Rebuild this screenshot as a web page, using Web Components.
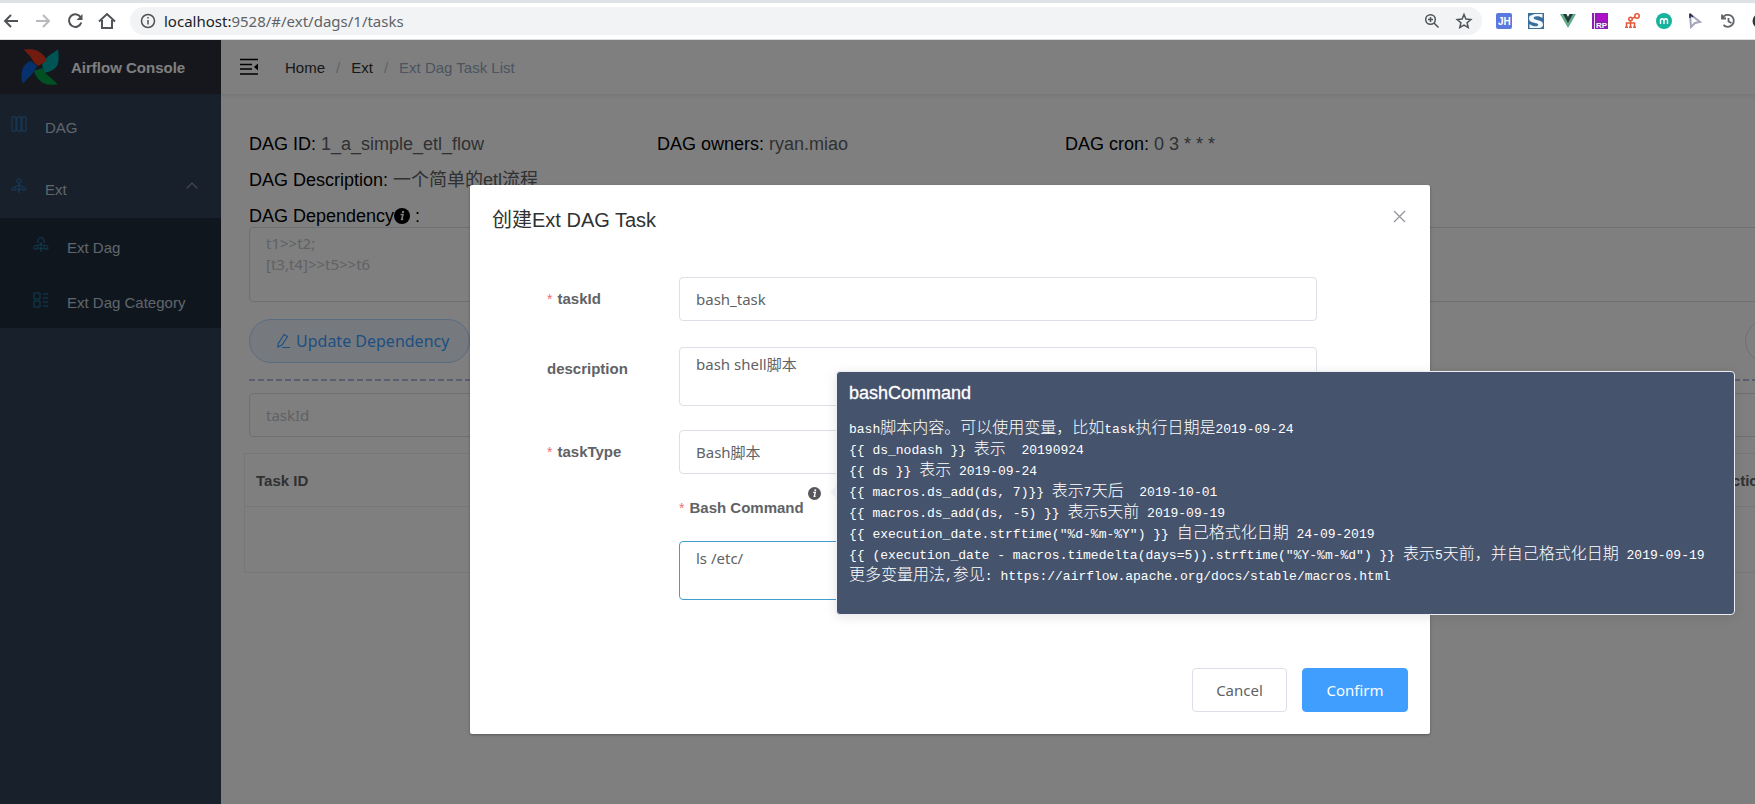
<!DOCTYPE html>
<html lang="en">
<head>
<meta charset="utf-8">
<title>Airflow Console</title>
<style>
html, body { margin: 0; height: 100%; }
body { overflow: hidden; font-family: "Liberation Sans", "Noto Sans CJK SC", sans-serif; color: #303133; }
</style>
</head>
<body>
<console-page></console-page>
<script>
const UI = '"Noto Sans", "Noto Sans CJK SC", sans-serif';
const define = (name, html) => {
  const template = document.createElement('template');
  template.innerHTML = html;
  customElements.define(name, class extends HTMLElement {
    constructor() {
      super();
      this.attachShadow({ mode: 'open' }).append(template.content.cloneNode(true));
    }
  });
};
// One block per line, with runs of Chinese text wrapped so that they can be set two Latin cells wide.
const lines = text => text.split('\n').map(line =>
  `<div>${line.replace(/[\u3000-\u9fff\uff00-\uffef]+|[^\u3000-\u9fff\uff00-\uffef]+/g, run =>
    `<span${/[\u3000-\uffef]/.test(run) ? ' class="han"' : ''}>${run}</span>`)}</div>`).join('');

define('browser-bar', `
<style>
:host { display: flex; align-items: center; box-sizing: border-box; height: 40px; border-top: 3px solid #dee1e6; border-bottom: 1px solid #dcdddf; background: #fff; padding-left: 1px; position: relative; overflow: hidden; flex: none; }
.tab { position: absolute; left: 1618px; top: -3px; width: 74px; height: 3px; background: #fff; border-radius: 8px 8px 0 0; }
nav { display: flex; gap: 12px; margin-right: 13px; }
button { all: unset; display: block; width: 20px; height: 20px; }
svg { display: block; width: 20px; height: 20px; fill: none; stroke: #505357; stroke-width: 2; }
.off svg { stroke: #b8babd; }
label { flex: 1; display: flex; align-items: center; gap: 6px; height: 28px; border-radius: 14px; background: #f1f3f4; padding: 0 8px; }
.addr { flex: 1; display: flex; font: 15px/28px ${UI}; color: #5f6368; }
.addr b { font-weight: 400; color: #202124; }
.tools { display: flex; gap: 12px; }
.ext { display: flex; gap: 16px; margin-left: 14px; width: 259px; flex: none; }
.ext svg { width: 16px; height: 16px; flex: none; stroke: none; }
.ext text { font: bold 8px "Liberation Sans", sans-serif; }
</style>
<div class="tab"></div>
<nav>
<button aria-label="Back"><svg viewBox="0 0 20 20"><path d="M17 10H4M10 4l-6 6 6 6"/></svg></button>
<button class="off" aria-label="Forward"><svg viewBox="0 0 20 20"><path d="M3 10h13M10 4l6 6-6 6"/></svg></button>
<button aria-label="Reload"><svg viewBox="0 0 20 20"><path d="M15.500 6A6.300 6.300 0 1 0 16.300 11.500"/><path d="M17.500 3v6h-6z" fill="#505357" stroke="none"/></svg></button>
<button aria-label="Home page"><svg viewBox="0 0 20 20"><path d="M2 10.500 10 3l8 7.500M5 9v8h10V9"/></svg></button>
</nav>
<label>
<svg viewBox="0 0 20 20" style="stroke-width:1.500"><circle cx="10" cy="10" r="6.500"/><path d="M10 9v4.500M10 6v1.500"/></svg>
<span class="addr"><b>localhost:</b>9528/#/ext/dags/1/tasks</span>
<span class="tools">
<svg viewBox="0 0 20 20" style="stroke-width:1.500"><circle cx="8.500" cy="8.500" r="4.800"/><path d="M12 12l4.500 4.500M8.500 6v5M6 8.500h5"/></svg>
<svg viewBox="0 0 20 20" style="stroke-width:1.500"><path d="M10 3.500l1.900 4.600 4.900.4-3.700 3.200 1.100 4.800-4.200-2.500-4.200 2.500 1.100-4.800-3.700-3.200 4.900-.4z"/></svg>
</span>
</label>
<div class="ext">
<svg viewBox="0 0 16 16"><rect width="16" height="16" rx="2" fill="#5b78e0"/><text x="2" y="12" style="font-size:10px" fill="#fff">JH</text></svg>
<svg viewBox="0 0 16 16"><path d="M0 0h16v16H0z" fill="#3c6e9b"/><path d="M1.500 3l5-2h8v4C12 3 8 2.500 6 4c-1 1.500 1 2.500 3 3 4 .8 6 2 6 4.500 0 2-1.500 3.500-4 3.500H1.500v-4c3 2.500 7 3 8.500 1.500 1-1.500-1-2-3-2.500C3 9.200 1 8 1 5.500z" fill="#f2f8fc"/></svg>
<svg viewBox="0 0 16 16"><path d="M0 1h6l2 4 2-4h6L8 15z" fill="#62ac8a"/><path d="M3 1h3.500L8 4l1.500-3H13L8 10z" fill="#263c3c"/></svg>
<svg viewBox="0 0 16 16"><path d="M0 0h16v16H0z" fill="#8b1fb0"/><path d="M2 0h1v16H2z" fill="#f0d8f8"/><path d="M5 1h10v7H5z" fill="#b010c8"/><text x="4" y="15" fill="#fff">RP</text></svg>
<svg viewBox="0 0 16 16"><g fill="none" stroke="#e45a3c" stroke-width="1.600"><circle cx="13" cy="3" r="2.200"/><circle cx="6.500" cy="6" r="1.700"/><path d="M8 5.500l3-1.500M6.500 8v6M2.500 14v-4h8v4M1 14.200h3M5 14.200h3M9 14.200h3"/></g></svg>
<svg viewBox="0 0 16 16"><circle cx="8" cy="8" r="8" fill="#16b39c"/><path d="M4.500 11V6v2c0-3 3.500-3 3.500 0v3V8c0-3 3.500-3 3.500 0v3" fill="none" stroke="#fff" stroke-width="1.400"/></svg>
<svg viewBox="0 0 16 16"><path d="M2 1l10 8-5 1-4 4z" fill="#fff" stroke="#a4a5bd"/><path d="M2 1v4M2 1l3 3" stroke="#22254a" stroke-width="1.500"/></svg>
<svg viewBox="0 0 16 16"><g fill="none" stroke="#606367" stroke-width="1.800"><path d="M2.500 5A6 6 0 1 1 3.500 12M2 1.500v4h4M8.500 5v3.500l3 1.500"/></g></svg>
<svg viewBox="0 0 16 16"><circle cx="8" cy="8" r="7.500" fill="#33363b"/></svg>
</div>`);

define('menu-item', `
<style>
:host { display: block; }
a { display: flex; align-items: center; box-sizing: border-box; height: var(--h, 62px); padding-left: var(--indent, 11px); color: #bfcbd9; text-decoration: none; font-size: 15px; }
.icon { display: flex; width: 16px; margin-right: 18px; padding-bottom: 2px; }
.label { flex: 1; padding-top: 4px; }
.tail { display: flex; margin-right: 23px; padding-bottom: 2px; }
</style>
<a href="#"><span class="icon"><slot name="icon"></slot></span><span class="label"><slot></slot></span><span class="tail"><slot name="tail"></slot></span></a>`);

define('side-bar', `
<style>
:host { display: block; width: 221px; flex: none; background: #304156; }
.logo { display: flex; align-items: center; height: 54px; background: #2b2f3a; color: #fff; font-weight: 700; font-size: 15px; padding-left: 20px; gap: 11px; }
.logo svg { width: 40px; height: 40px; }
svg { width: 16px; height: 16px; fill: none; stroke: #2c78c0; display: block; }
.tail { width: 12px; height: 12px; stroke: #909399; }
.sub { background: #1f2d3d; --h: 55px; --indent: 33px; }
.sub svg { stroke: #2080b0; }
</style>
<div class="logo">
<svg viewBox="0 0 40 40"><g stroke="none"><path d="M38 2.500C39 9 39 15 37 19 34 23 29 25 24 26l-2-8C26 9 32 7 38 2.500z" fill="#00a9a6"/><path d="M37.500 37.500C32 38 27 38 23 36 18 33 15 28 14 24l8-3C27 30 33 31 37.500 37.500z" fill="#00a046"/><path d="M3 37C1 32 1 28 2 24 3 19 7 15 11 14l6 5c-1 3-3 5-5 8-3 4-6 5-9 10z" fill="#0c62d8"/><path d="M4 2.500C10 2 14 2 18 4c5 3 8 6 8.500 10L18 19c-2-2-5-4-6-7C10 8 7 7 4 2.500z" fill="#e43921"/></g></svg>
<span>Airflow Console</span></div>
<menu-item><svg slot="icon" viewBox="0 0 16 16"><path d="M1 1h4v14H1zM6 1h4v14H6zM11 1h4v14h-4z"/></svg>DAG</menu-item>
<menu-item><svg slot="icon" viewBox="0 0 16 16"><circle cx="8" cy="3" r="2.200"/><path d="M8 5v10M8 7L4 9M8 7l4 2M1 12c0-4 4-4 4 0zM11 12c0-4 4-4 4 0zM6 11l2 1 2-1"/></svg>Ext<svg slot="tail" class="tail" viewBox="0 0 16 16"><path d="M1 11l7-7 7 7" stroke-width="1.500"/></svg></menu-item>
<div class="sub">
<menu-item><svg slot="icon" viewBox="0 0 16 16"><path d="M5 6V3c0-3 6-3 6 0v3M8 5v10M8 7L4 9M8 7l4 2M1 12c0-5 4-5 4 0zM11 12c0-5 4-5 4 0zM6 11l2 1 2-1"/></svg>Ext Dag</menu-item>
<menu-item><svg slot="icon" viewBox="0 0 16 16"><path d="M1 1h6v6H1zM1 9h6v6H1zM10 2h5M10 6h5M10 10h5M10 14h5"/></svg>Ext Dag Category</menu-item>
</div>`);

define('top-nav', `
<style>
:host { display: flex; align-items: center; height: 55px; box-sizing: border-box; border-bottom: 1px solid #f0f1f2; box-shadow: 0 1px 4px rgba(0,21,41,.08); padding-left: 18px; gap: 26px; font-size: 15px; background: #fff; }
svg { width: 20px; height: 20px; display: block; }
nav { display: flex; gap: 11px; color: #97a8be; }
i { color: #c0c4cc; font-style: normal; }
a { color: #303133; text-decoration: none; }
</style>
<svg viewBox="0 0 20 20"><path d="M1 2.500h18M1 7.500h12M1 12h12M1 17h18" stroke="#000" stroke-width="1.500"/><path d="M19 6.500v7l-4-3.500z"/></svg>
<nav><a href="#">Home</a><i>/</i><a href="#">Ext</a><i>/</i><span>Ext Dag Task List</span></nav>`);

define('info-icon', `
<style>:host { display: inline-block; width: 16px; height: 16px; } svg { display: block; width: 100%; height: 100%; }</style>
<svg viewBox="0 0 16 16"><circle cx="8" cy="8" r="8" fill="currentColor"/><path d="M6.500 6.500h2.500l-1.300 5h1.600" fill="none" stroke="#fff" stroke-width="1.600"/><circle cx="9" cy="3.900" r="1.200" fill="#fff"/></svg>`);

define('dag-detail', `
<style>
:host { display: block; padding: 31px 19px 0 28px; }
.facts { display: grid; grid-template-columns: repeat(4, 1fr); font-size: 18px; line-height: 36px; color: #606266; }
.wide { grid-column: 1 / -1; }
b { font-weight: 400; color: #000; }
info-icon { vertical-align: -2px; color: #000; }
textarea, input { display: block; box-sizing: border-box; width: 100%; border: 1px solid #dcdfe6; border-radius: 4px; background: #fff; font: 15px/22px ${UI}; color: #606266; resize: none; }
textarea { height: 75px; padding: 5px 16px; margin-top: -7px; line-height: 21px; }
input { height: 44px; padding: 0 16px; }
::placeholder { color: #c0c4cc; opacity: 1; }
.row { display: flex; justify-content: space-between; margin: 17px 0 16px; }
button { box-sizing: border-box; height: 44px; border-radius: 22px; font: 16px/22px ${UI}; display: flex; align-items: center; gap: 5px; padding: 0 20px 0 25px; }
.update { border: 1px solid #b3d8ff; background: #ecf5ff; color: #409eff; }
.update svg { width: 16px; height: 16px; fill: none; stroke: currentColor; }
.more { width: 136px; border: 1px solid #dcdfe6; background: #fff; }
hr { border: 0; height: 2px; margin: 0 0 12px; background: repeating-linear-gradient(90deg, #b4bce0 0 6px, transparent 6px 9px); }
.table { margin: 16px 0 0 -5px; border: 1px solid #ebeef5; font-size: 15px; }
table { width: 100%; border-collapse: collapse; table-layout: fixed; }
th { height: 52px; padding: 0 11px; text-align: left; color: #606266; border-bottom: 1px solid #ebeef5; }
th:last-child { width: 148px; }
td { height: 65px; padding: 0; }
</style>
<div class="facts">
<div><b>DAG ID:</b> 1_a_simple_etl_flow</div><div><b>DAG owners:</b> ryan.miao</div><div><b>DAG cron:</b> 0 3 * * *</div>
<div class="wide"><b>DAG Description:</b> 一个简单的etl流程</div>
<label class="wide" for="dep"><b>DAG Dependency<info-icon></info-icon> :</b></label>
</div>
<textarea id="dep" placeholder="t1&gt;&gt;t2;&#10;[t3,t4]&gt;&gt;t5&gt;&gt;t6"></textarea>
<div class="row"><button class="update"><svg viewBox="0 0 16 16"><path d="M3 11l6-9.500 3.500 2L7 12l-4 2zM7 14.500h8" stroke-width="1.200"/></svg>Update Dependency</button><button class="more" aria-label="More"></button></div>
<hr>
<input placeholder="taskId" aria-label="taskId">
<div class="table"><table><thead><tr><th>Task ID</th><th>Actions</th></tr></thead><tbody><tr><td></td><td></td></tr></tbody></table></div>`);

define('form-row', `
<style>
:host { display: grid; grid-template-columns: 132px 1fr; }
.label { font-weight: 700; font-size: 15px; color: #606266; line-height: 44px; }
</style>
<div class="label"><slot name="label"></slot></div><div><slot></slot></div>`);

define('help-popover', `
<style>
:host { display: block; box-sizing: border-box; background: #46536c; border: 1px solid #ebeef5; border-radius: 4px; padding: 10px 12px 27px; color: #fff; box-shadow: 0 2px 12px rgba(0,0,0,.1); }
h2 { margin: 0 0 15px; font-size: 18px; font-weight: 400; line-height: 22px; -webkit-text-stroke: .3px; }
.body { font: 13px/21px "Liberation Mono", "Noto Sans CJK SC", monospace; white-space: pre; }
</style>
<h2>bashCommand</h2>
<div class="body"><slot></slot></div>`);

define('task-dialog', `
<style>
:host { display: block; box-sizing: border-box; background: #fff; border-radius: 2px; box-shadow: 0 1px 3px rgba(0,0,0,.3); padding: 22px; position: relative; }
header { display: flex; justify-content: space-between; height: 26px; }
h1 { margin: 0; font-size: 20px; font-weight: 400; line-height: 26px; color: #303133; }
button { box-sizing: border-box; height: 44px; border-radius: 4px; border: 1px solid #dcdfe6; font: 15px/22px ${UI}; color: #606266; background: #fff; padding: 0; width: 95px; }
.close { border: 0; width: 18px; height: 18px; }
.close svg { display: block; width: 18px; height: 18px; stroke: #909399; fill: none; }
form { margin: 44px 91px 0 55px; display: grid; }
input, textarea, select { display: block; box-sizing: border-box; width: 100%; border: 1px solid #dcdfe6; border-radius: 4px; background: #fff; font: 15px/22px ${UI}; color: #606266; padding: 0 16px; height: 44px; resize: none; appearance: none; outline: 0; }
textarea { height: 59px; padding: 5px 16px; }
.gap { margin-bottom: 26px; }
.desc { margin-bottom: 24px; }
i { color: #f56c6c; font: 14px "Liberation Sans", sans-serif; margin-right: 5px; }
.cmd { display: flex; align-items: flex-start; height: 67px; font: bold 15px/24px "Liberation Sans", sans-serif; color: #606266; }
.cmd label { padding-top: 22px; }
.cmd info-icon { width: 13px; height: 13px; margin: 13px 0 0 4px; color: #55575b; }
textarea.focus { border-color: #409fd0; }
footer { display: flex; justify-content: flex-end; gap: 15px; margin-top: 68px; }
.ok { background: #409eff; border-color: #409eff; color: #fff; width: 106px; }
help-popover { position: absolute; left: 366px; top: 186px; width: 899px; }
.han { font: 300 16px/0 "Noto Sans CJK SC", sans-serif; }
.arrow { position: absolute; left: 360px; top: 301px; border: 6px solid transparent; border-left: 0; border-right-color: #f4f6fa; }
</style>
<header><h1>创建Ext DAG Task</h1><button class="close" aria-label="Close"><svg viewBox="0 0 18 18"><path d="M4 4l11 11M15 4L4 15" stroke-width="1.200"/></svg></button></header>
<form>
<form-row class="gap"><label slot="label" for="tid"><i>*</i>taskId</label><input id="tid" value="bash_task"></form-row>
<form-row class="desc"><label slot="label" for="desc">description</label><textarea id="desc">bash shell脚本</textarea></form-row>
<form-row><label slot="label" for="type"><i>*</i>taskType</label><select id="type"><option>Bash脚本</option></select>
<div class="cmd"><label for="cmd"><i>*</i>Bash Command</label><info-icon></info-icon></div>
<textarea id="cmd" class="focus">ls /etc/</textarea></form-row>
</form>
<footer><button>Cancel</button><button class="ok">Confirm</button></footer>
<span class="arrow"></span>
<help-popover>${lines(`bash脚本内容。可以使用变量，比如task执行日期是2019-09-24
{{ ds_nodash }} 表示  20190924
{{ ds }} 表示 2019-09-24
{{ macros.ds_add(ds, 7)}} 表示7天后  2019-10-01
{{ macros.ds_add(ds, -5) }} 表示5天前 2019-09-19
{{ execution_date.strftime("%d-%m-%Y") }} 自己格式化日期 24-09-2019
{{ (execution_date - macros.timedelta(days=5)).strftime("%Y-%m-%d") }} 表示5天前，并自己格式化日期 2019-09-19
更多变量用法,参见: https://airflow.apache.org/docs/stable/macros.html`)}</help-popover>`);

define('console-page', `
<style>
:host { display: flex; flex-direction: column; height: 100%; overflow: hidden; }
.view { flex: 1; position: relative; width: calc(100% + 145px); display: flex; background: #fff; overflow: hidden; }
main { flex: 1; min-width: 0; }
.scrim { position: absolute; inset: 0; background: rgba(0,0,0,.5); }
task-dialog { width: 960px; margin: 145px auto 0; }
</style>
<browser-bar></browser-bar>
<div class="view">
<side-bar></side-bar>
<main><top-nav></top-nav><dag-detail></dag-detail></main>
<div class="scrim"><task-dialog></task-dialog></div>
</div>`);
</script>
</body>
</html>
